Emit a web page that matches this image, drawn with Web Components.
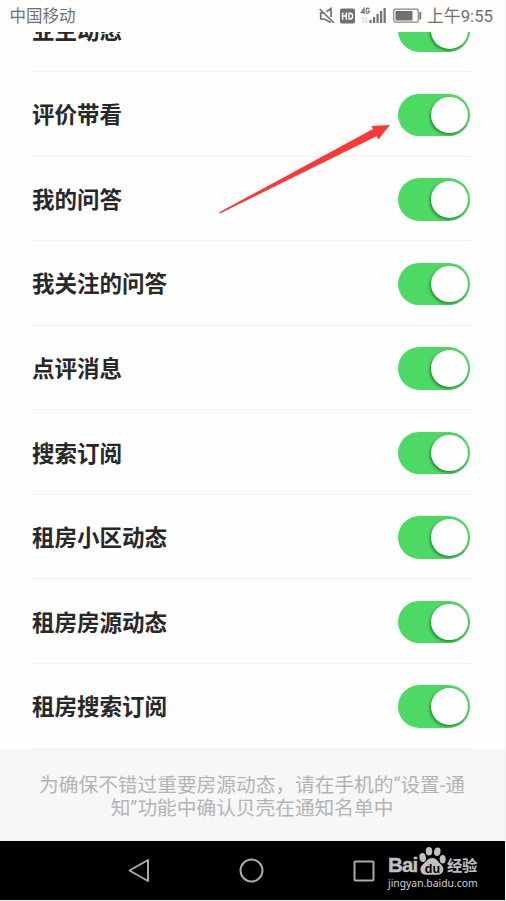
<!DOCTYPE html>
<html lang="zh-CN">
<head>
<meta charset="utf-8">
<title>通知设置</title>
<style>
html,body{margin:0;height:100%;background:#f1f1f1;overflow:hidden}
body{font-family:Roboto,"Noto Sans CJK SC",sans-serif}
</style>
</head>
<body>
<phone-screen>
  <status-bar></status-bar>
  <settings-list>
    <switch-row>业主动态</switch-row>
    <switch-row>评价带看</switch-row>
    <switch-row>我的问答</switch-row>
    <switch-row>我关注的问答</switch-row>
    <switch-row>点评消息</switch-row>
    <switch-row>搜索订阅</switch-row>
    <switch-row>租房小区动态</switch-row>
    <switch-row>租房房源动态</switch-row>
    <switch-row>租房搜索订阅</switch-row>
  </settings-list>
  <list-note><span>为确保不错过重要房源动态，请在手机的“设置-通</span><span>知”功能中确认贝壳在通知名单中</span></list-note>
  <nav-bar></nav-bar>
  <pointer-arrow></pointer-arrow>
</phone-screen>
<script>
const define = (name, html) => customElements.define(name, class extends HTMLElement {
  constructor() {
    super();
    this.attachShadow({ mode: 'open' }).innerHTML = html;
  }
});

define('phone-screen', `
<style>
:host{position:relative;display:flex;flex-direction:column;width:505px;height:900px;background:#fefefe;overflow:hidden}
</style><slot></slot>`);

define('status-bar', `
<style>
:host{display:flex;flex:none;align-items:center;justify-content:space-between;box-sizing:border-box;height:32px;padding:1px 12px 0 9.500px;color:#707070;font-size:16.5px;line-height:31px;background:#fefefd}
.right{display:flex;align-items:center}
svg{display:block}
.time{font-size:16.800px;margin-left:5px;white-space:nowrap}
</style>
<span>中国移动</span>
<div class="right">
<svg width="104" height="20" viewBox="319 6.500 104 20">
  <g fill="none" stroke="#707070" stroke-width="1.700">
    <path d="M326 12.500h-4.300v6h3.600l6.500 3.500M327.500 11.300l4.500-3.300v8.500M320.700 8.500l14.300 14"/>
  </g>
  <rect x="341" y="8" width="15" height="15" rx="2" fill="#707070"/>
  <path d="M343.600 12v7.200M347.300 12v7.200M343.600 15.500h3.700M350 12.700v5.800h1.300q2.300 0 2.300-2.900t-2.300-2.900z" fill="none" stroke="#fefefd" stroke-width="1.400"/>
  <g fill="none" stroke="#707070" stroke-width="1.200"><path d="M365 13.500v-5.600l-2.700 4h3.600M370.200 8.700q-.6-1-1.600-1-1.500 0-1.500 2.600t1.500 2.600q1.500 0 1.600-2.200h-1.600"/></g>
  <path d="M364 17v5.500m-1.300-4.300 1.300-1.400 1.300 1.400M367.300 16.500v5.500m-1.300-1.200 1.300 1.400 1.300-1.400" fill="none" stroke="#d0d0d0" stroke-width=".9"/>
  <g fill="#707070"><rect x="370.500" y="19.500" width="2.200" height="3"/><rect x="374" y="16.500" width="2.200" height="6"/><rect x="377.500" y="13.500" width="2.200" height="9"/><rect x="381" y="10.500" width="2.200" height="12"/><rect x="384.500" y="7.500" width="2.200" height="15"/></g>
  <rect x="394.700" y="8.700" width="24.600" height="13" rx="1.500" fill="none" stroke="#858585" stroke-width="1.200"/>
  <rect x="396.500" y="10.500" width="17" height="9.500" fill="#707070"/>
  <path d="M421.300 11.500v7.500" stroke="#707070" stroke-width="1.800"/>
</svg>
<span class="time">上午9:55</span></div>`);

define('settings-list', `
<style>
:host{display:flex;flex:none;flex-direction:column;justify-content:flex-end;height:716.500px;overflow:hidden}
</style><slot></slot>`);

define('toggle-switch', `
<style>
:host{display:flex;justify-content:flex-end;box-sizing:border-box;width:72px;height:42.500px;padding:3px 2.500px;border-radius:22px;background:#4cd964}
i{width:37px;height:36.500px;border-radius:50%;background:#fefefe;box-shadow:-1px 1.500px 3px rgba(0,70,10,.6)}
</style><i></i>`);

define('switch-row', `
<style>
:host{display:flex;flex:none;align-items:center;justify-content:space-between;box-sizing:border-box;height:84.560px;margin:0 34px 0 32px;padding:2px 1px 0 0;border-bottom:1px solid #f2f2f2;color:#282828;font-size:22.500px;font-weight:700;line-height:30px}
span{padding-top:1px}
</style><span><slot></slot></span><toggle-switch></toggle-switch>`);

define('list-note', `
<style>
:host{display:flex;flex:none;flex-direction:column;align-items:center;box-sizing:border-box;height:92.500px;padding:25px 1px 0 0;background:#f7f7f7;color:#b4b4b4;font-size:19.700px;line-height:23px;white-space:nowrap}
</style><slot></slot>`);

define('baidu-mark', `
<style>
:host{display:block;color:#c1c1c1}
.brand{display:flex;align-items:flex-end;height:30px}
.bai{width:30px;padding-bottom:1px;font:700 20.500px/21px "Liberation Sans",sans-serif;letter-spacing:-.8px;-webkit-text-stroke:.4px currentColor}
.jy{padding-bottom:1px;font:700 15.300px/22px "Noto Sans CJK SC",sans-serif;letter-spacing:-.4px}
.url{font:10.350px/14px "Noto Sans",sans-serif;white-space:nowrap;color:#d0d0d0}
.paw{margin:0 1px 1px 1px}
svg{display:block}
</style>
<div class="brand"><span class="bai">Bai</span>
<div class="paw"><svg width="27" height="29" viewBox="418 846 27 29">
 <g fill="currentColor"><ellipse cx="421.700" cy="857.500" rx="3.200" ry="4.500" transform="rotate(-10 421.700 857.500)"/><ellipse cx="428" cy="851.200" rx="3.200" ry="4.300"/><ellipse cx="436.300" cy="851.700" rx="3.200" ry="4.300" transform="rotate(12 436.300 851.700)"/><ellipse cx="441.700" cy="859.200" rx="3" ry="4.300"/>
 <path d="M431.500 858c4 0 5.500 4 8.500 6.500 4.500 4 2 10.300-3 10.300h-11.500c-6 0-8-6-4-10 3-2.500 5-6.800 10-6.800z"/></g>
 <text x="431.500" y="873" text-anchor="middle" font-family="Liberation Sans, sans-serif" font-weight="700" font-size="12.500" fill="#000">du</text>
</svg></div><span class="jy">经验</span></div>
<div class="url">jingyan.baidu.com</div>`);

define('nav-bar', `
<style>
:host{display:grid;flex:none;grid-template-columns:124px 115px 112px auto;align-items:center;box-sizing:border-box;height:59px;background:#000;color:#aaa}
svg{display:block;flex:none;fill:none;stroke:currentColor;stroke-width:2;stroke-linejoin:round}
.last{display:flex;align-items:center}
baidu-mark{margin-left:11px;padding-bottom:6px}
</style>
<span></span>
<svg width="26" height="26"><path d="M5.500 12.500 24 2v21z"/></svg>
<svg width="26" height="26"><circle cx="12.500" cy="12.500" r="11"/></svg>
<div class="last"><svg width="26" height="26"><rect x="3.500" y="3.500" width="19" height="19" rx="1"/></svg><baidu-mark></baidu-mark></div>`);

define('pointer-arrow', `
<style>
:host{position:absolute;left:219px;top:124px;pointer-events:none}
svg{display:block}
</style>
<svg width="171" height="91" viewBox="219 124 171 91"><path d="M219.300 213.500 219.700 212 373 129 371.300 126 389.800 125 378.500 139.500 376.500 136.200 220 213.500z" fill="#fd3938"/></svg>`);
</script>
</body>
</html>
